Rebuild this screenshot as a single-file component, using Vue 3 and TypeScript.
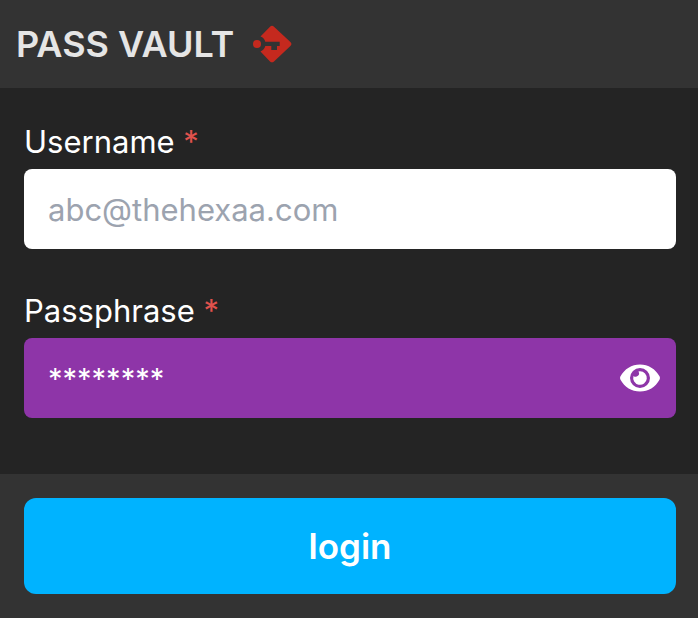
<script setup lang="ts">
import { ref } from 'vue'

const username = ref('')
const passphrase = ref('')
const revealed = ref(false)
</script>

<template>
  <main class="vault">
    <header class="header">
      <h1 class="title">PASS VAULT</h1>
      <svg class="logo" viewBox="0 0 40 40" aria-hidden="true">
        <path
          fill="#c5291e"
          d="M8.5 12.6 18 2.8Q20 .8 22 2.8L38.4 18Q40.4 20 38.4 22L22 37.400Q20 39.200 18 37.400L8.500 27.400C11 26.500 12.700 24.600 13.300 22H19.300V26H25V22H27.700V17.800H13.300C12.700 15.400 11 13.500 8.500 12.600Z"
        />
        <circle cx="5" cy="20" r="4" fill="#c5291e" />
      </svg>
    </header>

    <form id="login-form" class="fields" @submit.prevent>
      <div class="field">
        <label class="label" for="username">Username <span class="required">*</span></label>
        <input
          id="username"
          v-model="username"
          class="input"
          type="text"
          placeholder="abc@thehexaa.com"
          autocomplete="username"
        />
      </div>
      <div class="field">
        <label class="label" for="passphrase">Passphrase <span class="required">*</span></label>
        <div class="secret">
          <input
            id="passphrase"
            v-model="passphrase"
            class="secret-input"
            :type="revealed ? 'text' : 'password'"
            placeholder="********"
            autocomplete="current-password"
          />
          <button class="reveal" type="button" aria-label="Show passphrase" @click="revealed = !revealed">
            <svg class="eye" viewBox="0 0 40 28" aria-hidden="true">
              <path
                fill="#fff"
                fill-rule="evenodd"
                d="M20 .5C11.7.5 4.5 5 .5 12.3Q-.4 14 .5 15.7C4.5 23 11.7 27.5 20 27.5S35.5 23 39.5 15.7Q40.4 14 39.5 12.3C35.5 5 28.3.5 20 .5ZM20 4A10 10 0 1 1 20 24A10 10 0 1 1 20 4Z"
              />
              <path
                fill="#fff"
                d="M20 7.2A6.8 6.8 0 1 1 13.5 12A3.4 3.4 0 0 0 18.4 7.4A6.8 6.8 0 0 1 20 7.2Z"
              />
            </svg>
          </button>
        </div>
      </div>
    </form>

    <footer class="footer">
      <button class="login" type="submit" form="login-form">login</button>
    </footer>
  </main>
</template>

<style>
body {
  margin: 0;
  background: #333333;
}
</style>

<style scoped>
.vault {
  background: #242424;
  color: #ffffff;
  font-family: Inter, "Liberation Sans", sans-serif;
}

.header {
  display: flex;
  align-items: center;
  gap: 18px;
  padding: 20px 16px;
  background: #333333;
}

.title {
  margin: 0;
  color: #e5e5e5;
  font-size: 36px;
  font-weight: 600;
  line-height: 48px;
}

.logo {
  width: 40px;
  height: 40px;
}

.fields {
  display: flex;
  flex-direction: column;
  gap: 40px;
  padding: 32px 22px 56px 24px;
}

.field {
  display: flex;
  flex-direction: column;
  gap: 6px;
}

.label {
  font-size: 31px;
  line-height: 43px;
}

.required {
  color: #e0524d;
}

.input,
.secret {
  box-sizing: border-box;
  width: 100%;
  height: 80px;
  border: 0;
  border-radius: 8px;
}

.input {
  padding: 0 24px;
  background: #ffffff;
  color: #242424;
  font: inherit;
  font-size: 31px;
}

.input::placeholder {
  color: #9ca3af;
  opacity: 1;
}

.secret {
  display: flex;
  align-items: center;
  background: #8e35a8;
}

.secret-input {
  flex: 1;
  min-width: 0;
  height: 80px;
  box-sizing: border-box;
  padding: 0 24px;
  border: 0;
  background: transparent;
  color: #ffffff;
  font: inherit;
  font-size: 29px;
}

.secret-input::placeholder {
  color: #ffffff;
  opacity: 1;
}

.reveal {
  display: flex;
  padding: 0 16px;
  border: 0;
  background: transparent;
  cursor: pointer;
}

.eye {
  width: 40px;
  height: 28px;
}

.footer {
  padding: 24px 22px 24px 24px;
  background: #333333;
}

.login {
  display: block;
  width: 100%;
  height: 96px;
  padding: 0;
  border: 0;
  border-radius: 12px;
  background: #00b3ff;
  color: #ffffff;
  font: inherit;
  font-size: 35px;
  font-weight: 600;
  cursor: pointer;
}
</style>
